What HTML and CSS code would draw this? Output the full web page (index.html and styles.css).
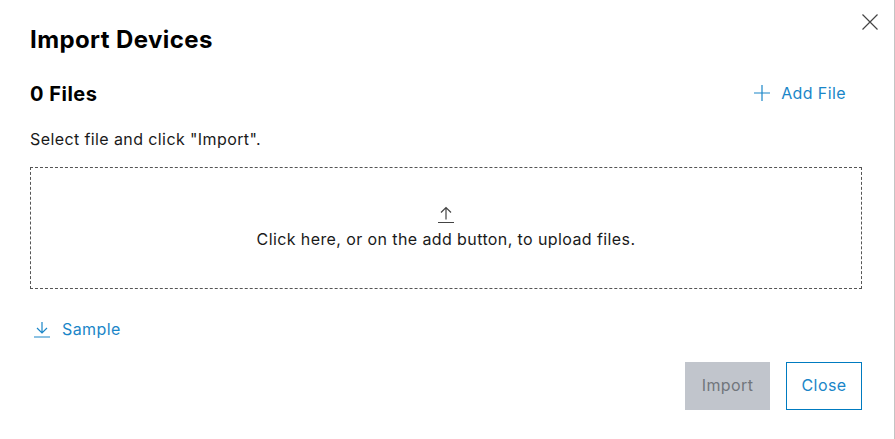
FILE: index.html
```html
<!DOCTYPE html>
<html lang="en">

<head>
    <meta charset="UTF-8">
    <meta name="viewport" content="width=device-width, initial-scale=1.0">
    <title>Import Devices</title>
    <link rel="stylesheet" href="styles.css">
</head>

<body>
    <div class="dialog">
        <button class="close-icon" aria-label="Close">
            <svg width="24" height="24" viewBox="0 0 24 24"><path d="M4.500 4.500L19.500 19.500M19.500 4.500L4.500 19.500" /></svg>
        </button>
        <h1 class="title">Import Devices</h1>
        <div class="files-row">
            <h2 class="files-count">0 Files</h2>
            <a class="link add-file">
                <svg width="24" height="24" viewBox="0 0 24 24"><path d="M12 4V20M4 12H20" /></svg>
                Add File
            </a>
        </div>
        <p class="hint">Select file and click "Import".</p>
        <div class="dropzone">
            <svg width="24" height="24" viewBox="0 0 24 24"><path d="M12 3.500V15.500M7 8.500L12 3.500L17 8.500M4 18.500H20" /></svg>
            <span>Click here, or on the add button, to upload files.</span>
        </div>
        <a class="link sample">
            <svg width="24" height="24" viewBox="0 0 24 24"><path d="M12 5V16M7 11L12 16L17 11M4 20H20" /></svg>
            Sample
        </a>
        <div class="actions">
            <button class="btn btn-disabled" disabled>Import</button>
            <button class="btn btn-outline">Close</button>
        </div>
    </div>
</body>

</html>
```
FILE: styles.css
```css
/* page */
html,
body {
    margin: 0;
    padding: 0;
    height: 100%;
    background-color: #fff;
    overflow: hidden;
}

body {
    font-family: "Inter", Arial, sans-serif;
    font-size: 16px;
    letter-spacing: 0.4px;
    color: #000;
}

svg {
    fill: none;
    stroke: currentColor;
    stroke-width: 1.2;
    flex: none;
}

/* dialog */
.dialog {
    position: relative;
    box-sizing: border-box;
    height: 439px;
    padding: 23px 32px 0 30px;
    border-right: 1px solid #c4c4c4;
}

.close-icon {
    position: absolute;
    top: 10px;
    right: 12px;
    width: 24px;
    height: 24px;
    padding: 0;
    border: none;
    background: none;
    color: #444;
}

.title {
    margin: 0;
    font-size: 24px;
    line-height: 34px;
    font-weight: 700;
    letter-spacing: 0.4px;
}

.files-row {
    display: flex;
    justify-content: space-between;
    align-items: center;
    height: 34px;
    margin-top: 19px;
    padding-right: 16px;
}

.files-count {
    margin: 2px 0 0;
    font-size: 20px;
    font-weight: 700;
    letter-spacing: 0.5px;
}

.link {
    display: flex;
    align-items: center;
    gap: 8px;
    color: #1a86c8;
}

.add-file {
    gap: 7px;
}

.hint {
    margin: 17px 0 0;
    line-height: 24px;
    color: #1a1a1a;
}

/* upload area */
.dropzone {
    display: flex;
    flex-direction: column;
    align-items: center;
    justify-content: center;
    box-sizing: border-box;
    height: 122px;
    margin-top: 16px;
    padding-bottom: 3px;
    border: 1px dashed #555;
    color: #1a1a1a;
}

.dropzone svg {
    margin-bottom: 1px;
    color: #444;
}

.sample {
    margin-top: 28px;
}

/* buttons */
.actions {
    display: flex;
    justify-content: flex-end;
    gap: 16px;
    margin-top: 21px;
}

.btn {
    box-sizing: border-box;
    height: 48px;
    padding: 0 0 2px;
    font-family: inherit;
    font-size: 16px;
    letter-spacing: 0.4px;
    border: 1px solid transparent;
}

.btn-disabled {
    width: 85px;
    background-color: #c1c5cc;
    color: #71767c;
}

.btn-outline {
    width: 76px;
    background-color: #fff;
    border-color: #007bc0;
    color: #1a86c8;
}
```
